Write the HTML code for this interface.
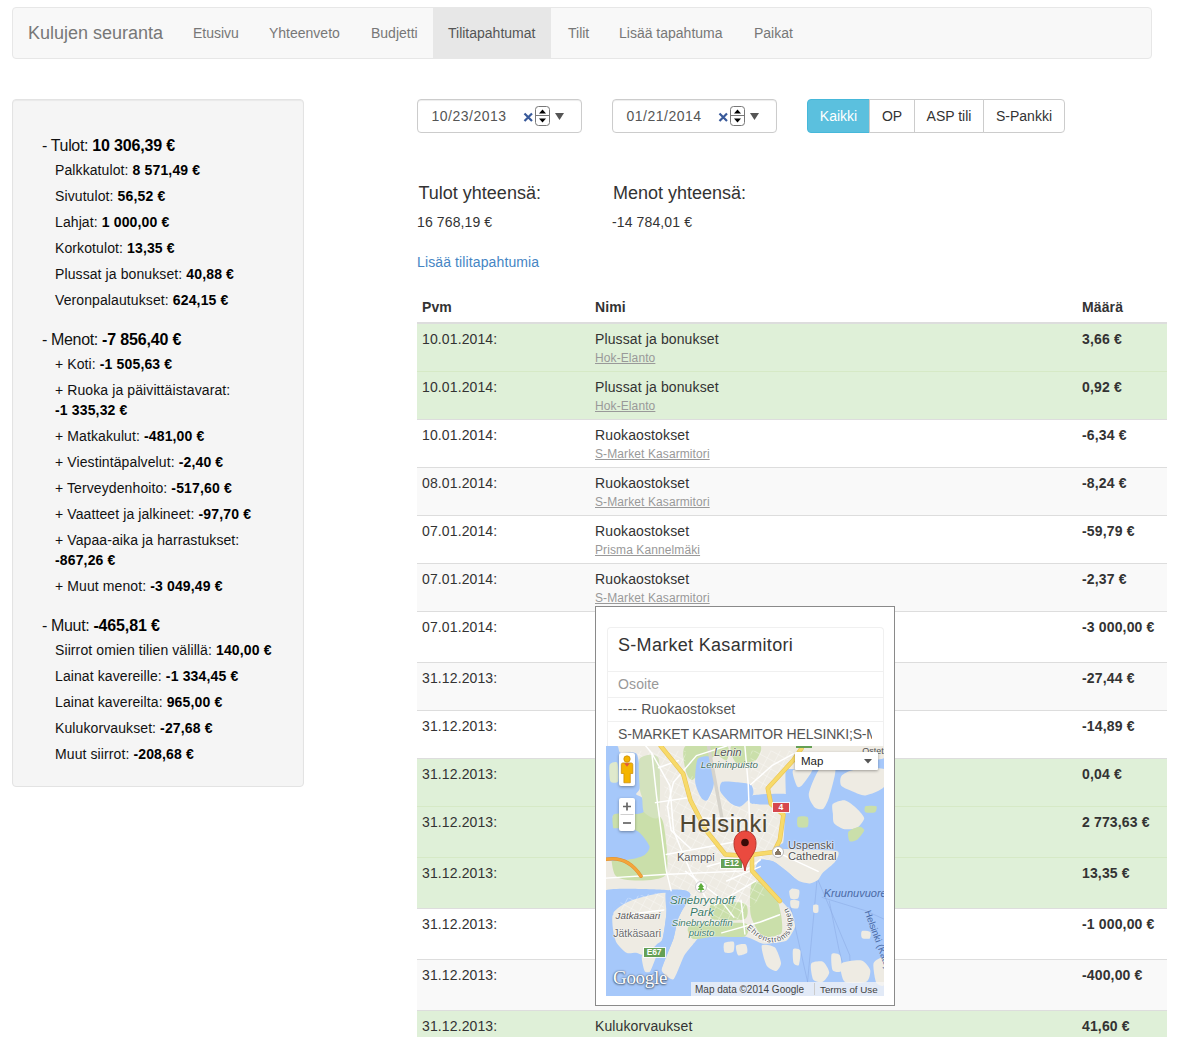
<!DOCTYPE html>
<html><head><meta charset="utf-8"><title>Kulujen seuranta</title>
<style>
*{box-sizing:border-box;}
html,body{margin:0;padding:0;background:#fff;}
body{width:1179px;height:1037px;overflow:hidden;position:relative;font-family:"Liberation Sans",sans-serif;font-size:14px;line-height:20px;color:#333;}
.t{position:absolute;white-space:nowrap;line-height:20px;letter-spacing:0.12px;}
.navbar{position:absolute;left:12px;top:7px;width:1140px;height:52px;background:#f8f8f8;border:1px solid #e7e7e7;border-radius:4px;}
.brand{position:absolute;left:15px;top:15px;font-size:18px;line-height:20px;color:#777;white-space:nowrap;}
.nav a{position:absolute;top:0;height:50px;line-height:50px;color:#777;white-space:nowrap;padding:0 15px;}
.nav a.active{background:#e7e7e7;color:#555;}
.well{position:absolute;left:12px;top:99px;width:292px;height:688px;background:#f5f5f5;border:1px solid #e3e3e3;border-radius:4px;box-shadow:inset 0 1px 1px rgba(0,0,0,.05);}
.sb{position:absolute;white-space:nowrap;line-height:20px;color:#111;font-size:14px;letter-spacing:0.1px;}
.sb.h{font-size:16px;letter-spacing:-0.35px;}
.sb.h b{letter-spacing:-0.15px;}
.sb b{color:#000;letter-spacing:0.15px;}
.inp{position:absolute;top:99px;width:165px;height:34px;border:1px solid #ccc;border-radius:4px;background:#fff;box-shadow:inset 0 1px 1px rgba(0,0,0,.075);}
.inp .v{position:absolute;left:13.5px;top:6px;line-height:20px;color:#555;letter-spacing:0.5px;}
.btng{position:absolute;left:807px;top:99px;height:34px;}
.btn{position:absolute;top:0;height:34px;line-height:20px;padding:6px 0;text-align:center;border:1px solid #ccc;background:#fff;color:#333;}
.row{position:absolute;left:417px;width:750px;border-top:1px solid #ddd;}
.sl{font-size:12px;color:#999;text-decoration:underline;line-height:17px;letter-spacing:0.1px;}
</style></head><body>
<div class="navbar">
<div class="brand">Kulujen seuranta</div>
<div class="nav">
<a style="left:165px">Etusivu</a><a style="left:241px">Yhteenveto</a><a style="left:343px">Budjetti</a><a class="active" style="left:420px;width:118px">Tilitapahtumat</a><a style="left:540px">Tilit</a><a style="left:591px">Lisää tapahtuma</a><a style="left:726px">Paikat</a>
</div></div>
<div class="well"></div>
<div class="sb h" style="top:136px;left:42px">- Tulot: <b>10 306,39 €</b></div>
<div class="sb " style="top:160px;left:55px">Palkkatulot: <b>8 571,49 €</b></div>
<div class="sb " style="top:186px;left:55px">Sivutulot: <b>56,52 €</b></div>
<div class="sb " style="top:212px;left:55px">Lahjat: <b>1 000,00 €</b></div>
<div class="sb " style="top:238px;left:55px">Korkotulot: <b>13,35 €</b></div>
<div class="sb " style="top:264px;left:55px">Plussat ja bonukset: <b>40,88 €</b></div>
<div class="sb " style="top:290px;left:55px">Veronpalautukset: <b>624,15 €</b></div>
<div class="sb h" style="top:330px;left:42px">- Menot: <b>-7 856,40 €</b></div>
<div class="sb " style="top:354px;left:55px">+ Koti: <b>-1 505,63 €</b></div>
<div class="sb " style="top:380px;left:55px">+ Ruoka ja päivittäistavarat:</div>
<div class="sb " style="top:400px;left:55px"><b>-1 335,32 €</b></div>
<div class="sb " style="top:426px;left:55px">+ Matkakulut: <b>-481,00 €</b></div>
<div class="sb " style="top:452px;left:55px">+ Viestintäpalvelut: <b>-2,40 €</b></div>
<div class="sb " style="top:478px;left:55px">+ Terveydenhoito: <b>-517,60 €</b></div>
<div class="sb " style="top:504px;left:55px">+ Vaatteet ja jalkineet: <b>-97,70 €</b></div>
<div class="sb " style="top:530px;left:55px">+ Vapaa-aika ja harrastukset:</div>
<div class="sb " style="top:550px;left:55px"><b>-867,26 €</b></div>
<div class="sb " style="top:576px;left:55px">+ Muut menot: <b>-3 049,49 €</b></div>
<div class="sb h" style="top:616px;left:42px">- Muut: <b>-465,81 €</b></div>
<div class="sb " style="top:640px;left:55px">Siirrot omien tilien välillä: <b>140,00 €</b></div>
<div class="sb " style="top:666px;left:55px">Lainat kavereille: <b>-1 334,45 €</b></div>
<div class="sb " style="top:692px;left:55px">Lainat kavereilta: <b>965,00 €</b></div>
<div class="sb " style="top:718px;left:55px">Kulukorvaukset: <b>-27,68 €</b></div>
<div class="sb " style="top:744px;left:55px">Muut siirrot: <b>-208,68 €</b></div>
<div class="inp" style="left:417px"><div class="v">10/23/2013</div><svg style="position:absolute;left:0;top:0" width="165" height="34" viewBox="0 0 165 34"><path d="M106.5 13.5 L114 21 M114 13.5 L106.5 21" stroke="#38599a" stroke-width="2.2" stroke-linecap="butt"/><rect x="117.5" y="6.5" width="14" height="19" rx="3" ry="3" fill="#fff" stroke="#777" stroke-width="1"/><line x1="118" y1="15.5" x2="131" y2="15.5" stroke="#777" stroke-width="1"/><path d="M121 13.5 L124.5 9.5 L128 13.5 Z" fill="#000"/><path d="M121 18.5 L128 18.5 L124.5 22.5 Z" fill="#000"/><path d="M137 13 L146 13 L141.5 20 Z" fill="#555"/></svg></div>
<div class="inp" style="left:612px"><div class="v">01/21/2014</div><svg style="position:absolute;left:0;top:0" width="165" height="34" viewBox="0 0 165 34"><path d="M106.5 13.5 L114 21 M114 13.5 L106.5 21" stroke="#38599a" stroke-width="2.2" stroke-linecap="butt"/><rect x="117.5" y="6.5" width="14" height="19" rx="3" ry="3" fill="#fff" stroke="#777" stroke-width="1"/><line x1="118" y1="15.5" x2="131" y2="15.5" stroke="#777" stroke-width="1"/><path d="M121 13.5 L124.5 9.5 L128 13.5 Z" fill="#000"/><path d="M121 18.5 L128 18.5 L124.5 22.5 Z" fill="#000"/><path d="M137 13 L146 13 L141.5 20 Z" fill="#555"/></svg></div>
<div class="btng"><div class="btn" style="left:0;width:63px;background:#5bc0de;border-color:#46b8da;color:#fff;border-radius:4px 0 0 4px">Kaikki</div><div class="btn" style="left:62px;width:46px">OP</div><div class="btn" style="left:107px;width:70px">ASP tili</div><div class="btn" style="left:176px;width:82px;border-radius:0 4px 4px 0">S-Pankki</div></div>
<div class="t" style="left:418.5px;top:183px;font-size:18px;color:#333;letter-spacing:0">Tulot yhteensä:</div>
<div class="t" style="left:613px;top:183px;font-size:18px;color:#333;letter-spacing:0">Menot yhteensä:</div>
<div class="t" style="left:417px;top:212px;color:#333">16 768,19 €</div>
<div class="t" style="left:612px;top:212px;color:#333">-14 784,01 €</div>
<div class="t" style="left:417px;top:252px;color:#4585c4">Lisää tilitapahtumia</div>
<div class="t" style="left:422px;top:297px;font-weight:bold;color:#333">Pvm</div>
<div class="t" style="left:595px;top:297px;font-weight:bold;color:#333">Nimi</div>
<div class="t" style="left:1082px;top:297px;font-weight:bold;color:#333">Määrä</div>
<div class="row" style="top:322px;height:49px;background:#dff0d8;border-top-width:2px;border-top-color:#ddd"></div>
<div class="t" style="left:422px;top:329px">10.01.2014:</div>
<div class="t" style="left:595px;top:329px">Plussat ja bonukset</div>
<div class="t sl" style="left:595px;top:350px">Hok-Elanto</div>
<div class="t" style="left:1082px;top:329px;font-weight:bold;letter-spacing:0.15px">3,66 €</div>
<div class="row" style="top:371px;height:48px;background:#dff0d8;border-top-width:1px;border-top-color:#d6e9c6"></div>
<div class="t" style="left:422px;top:377px">10.01.2014:</div>
<div class="t" style="left:595px;top:377px">Plussat ja bonukset</div>
<div class="t sl" style="left:595px;top:398px">Hok-Elanto</div>
<div class="t" style="left:1082px;top:377px;font-weight:bold;letter-spacing:0.15px">0,92 €</div>
<div class="row" style="top:419px;height:48px;background:#fff;border-top-width:1px;border-top-color:#ddd"></div>
<div class="t" style="left:422px;top:425px">10.01.2014:</div>
<div class="t" style="left:595px;top:425px">Ruokaostokset</div>
<div class="t sl" style="left:595px;top:446px">S-Market Kasarmitori</div>
<div class="t" style="left:1082px;top:425px;font-weight:bold;letter-spacing:0.15px">-6,34 €</div>
<div class="row" style="top:467px;height:48px;background:#f9f9f9;border-top-width:1px;border-top-color:#ddd"></div>
<div class="t" style="left:422px;top:473px">08.01.2014:</div>
<div class="t" style="left:595px;top:473px">Ruokaostokset</div>
<div class="t sl" style="left:595px;top:494px">S-Market Kasarmitori</div>
<div class="t" style="left:1082px;top:473px;font-weight:bold;letter-spacing:0.15px">-8,24 €</div>
<div class="row" style="top:515px;height:48px;background:#fff;border-top-width:1px;border-top-color:#ddd"></div>
<div class="t" style="left:422px;top:521px">07.01.2014:</div>
<div class="t" style="left:595px;top:521px">Ruokaostokset</div>
<div class="t sl" style="left:595px;top:542px">Prisma Kannelmäki</div>
<div class="t" style="left:1082px;top:521px;font-weight:bold;letter-spacing:0.15px">-59,79 €</div>
<div class="row" style="top:563px;height:48px;background:#f9f9f9;border-top-width:1px;border-top-color:#ddd"></div>
<div class="t" style="left:422px;top:569px">07.01.2014:</div>
<div class="t" style="left:595px;top:569px">Ruokaostokset</div>
<div class="t sl" style="left:595px;top:590px">S-Market Kasarmitori</div>
<div class="t" style="left:1082px;top:569px;font-weight:bold;letter-spacing:0.15px">-2,37 €</div>
<div class="row" style="top:611px;height:51px;background:#fff;border-top-width:1px;border-top-color:#ddd"></div>
<div class="t" style="left:422px;top:617px">07.01.2014:</div>
<div class="t" style="left:1082px;top:617px;font-weight:bold;letter-spacing:0.15px">-3 000,00 €</div>
<div class="row" style="top:662px;height:48px;background:#f9f9f9;border-top-width:1px;border-top-color:#ddd"></div>
<div class="t" style="left:422px;top:668px">31.12.2013:</div>
<div class="t" style="left:1082px;top:668px;font-weight:bold;letter-spacing:0.15px">-27,44 €</div>
<div class="row" style="top:710px;height:48px;background:#fff;border-top-width:1px;border-top-color:#ddd"></div>
<div class="t" style="left:422px;top:716px">31.12.2013:</div>
<div class="t" style="left:1082px;top:716px;font-weight:bold;letter-spacing:0.15px">-14,89 €</div>
<div class="row" style="top:758px;height:48px;background:#dff0d8;border-top-width:1px;border-top-color:#ddd"></div>
<div class="t" style="left:422px;top:764px">31.12.2013:</div>
<div class="t" style="left:1082px;top:764px;font-weight:bold;letter-spacing:0.15px">0,04 €</div>
<div class="row" style="top:806px;height:51px;background:#dff0d8;border-top-width:1px;border-top-color:#d6e9c6"></div>
<div class="t" style="left:422px;top:812px">31.12.2013:</div>
<div class="t" style="left:1082px;top:812px;font-weight:bold;letter-spacing:0.15px">2 773,63 €</div>
<div class="row" style="top:857px;height:51px;background:#dff0d8;border-top-width:1px;border-top-color:#d6e9c6"></div>
<div class="t" style="left:422px;top:863px">31.12.2013:</div>
<div class="t" style="left:1082px;top:863px;font-weight:bold;letter-spacing:0.15px">13,35 €</div>
<div class="row" style="top:908px;height:51px;background:#fff;border-top-width:1px;border-top-color:#ddd"></div>
<div class="t" style="left:422px;top:914px">31.12.2013:</div>
<div class="t" style="left:1082px;top:914px;font-weight:bold;letter-spacing:0.15px">-1 000,00 €</div>
<div class="row" style="top:959px;height:51px;background:#f9f9f9;border-top-width:1px;border-top-color:#ddd"></div>
<div class="t" style="left:422px;top:965px">31.12.2013:</div>
<div class="t" style="left:1082px;top:965px;font-weight:bold;letter-spacing:0.15px">-400,00 €</div>
<div class="row" style="top:1010px;height:51px;background:#dff0d8;border-top-width:1px;border-top-color:#ddd"></div>
<div class="t" style="left:422px;top:1016px">31.12.2013:</div>
<div class="t" style="left:595px;top:1016px">Kulukorvaukset</div>
<div class="t" style="left:1082px;top:1016px;font-weight:bold;letter-spacing:0.15px">41,60 €</div>
<div style="position:absolute;left:595px;top:606px;width:300px;height:400px;border:1px solid #8a8a8a;background:#fff"></div>
<div style="position:absolute;left:607px;top:627px;width:277px;height:120px;border:1px solid #f0f0f0;border-bottom:none;border-radius:4px 4px 0 0;overflow:hidden"><div style="position:absolute;left:0;top:43px;width:100%;height:1px;background:#f0f0f0"></div><div style="position:absolute;left:0;top:69px;width:100%;height:1px;background:#f0f0f0"></div><div style="position:absolute;left:0;top:93px;width:100%;height:1px;background:#f0f0f0"></div></div>
<div class="t" style="left:618px;top:635px;font-size:18px;color:#333;letter-spacing:0.3px">S-Market Kasarmitori</div>
<div class="t" style="left:618px;top:674px;color:#999">Osoite</div>
<div class="t" style="left:618px;top:699px;color:#555">---- Ruokaostokset</div>
<div style="position:absolute;left:618px;top:724px;width:254px;height:22px;overflow:hidden"><div class="t" style="left:0;top:0;color:#555;letter-spacing:-0.18px">S-MARKET KASARMITOR HELSINKI;S-MARKET</div></div>
<div style="position:absolute;left:606px;top:746px;width:278px;height:250px;overflow:hidden"><svg width="278" height="250" viewBox="0 0 1153 1037" style="position:absolute;left:0;top:0;display:block"><rect x="0" y="0" width="1153" height="1037" fill="#a6c8fa"/><path d="M876,548 L836,978" fill="none" stroke="#8eaee6" stroke-width="2.5" stroke-linecap="round" stroke-linejoin="round" /><path d="M876,548 L1011,868 L1016,978" fill="none" stroke="#8eaee6" stroke-width="2.5" stroke-linecap="round" stroke-linejoin="round" /><path d="M896,628 L1076,683 L1153,718" fill="none" stroke="#8eaee6" stroke-width="2.5" stroke-linecap="round" stroke-linejoin="round" /><path d="M766,668 L836,978" fill="none" stroke="#8eaee6" stroke-width="2.5" stroke-linecap="round" stroke-linejoin="round" /><path d="M926,643 L966,843 L1001,978" fill="none" stroke="#8eaee6" stroke-width="2.5" stroke-linecap="round" stroke-linejoin="round" /><path d="M0,0 C96,-29 1057,-4 1153,0 C1249,4 1157,45 1153,50 C1149,55 1130,56 1100,60 C1070,64 820,92 790,95 C760,98 750,91 746,100 C742,109 746,193 746,205 C746,217 746,230 746,240 C746,250 741,317 740,330 C739,343 738,392 735,400 C732,408 682,422 700,425 C718,428 935,430 956,435 C977,440 955,472 950,480 C945,488 906,519 900,525 C894,531 884,551 880,555 C876,559 853,570 846,570 C839,570 812,567 800,560 C788,553 713,489 700,482 C687,475 647,469 640,472 C633,475 617,509 620,520 C623,531 671,590 680,600 C689,610 718,632 725,640 C732,648 765,681 770,690 C775,699 786,740 784,750 C782,760 759,802 748,808 C737,814 665,822 651,820 C637,818 593,792 576,790 C559,788 468,789 450,790 C432,791 366,799 360,800 C354,801 383,792 380,798 C377,804 333,854 325,868 C317,882 288,963 280,968 C272,973 230,942 230,928 C230,914 275,815 280,798 C285,781 292,737 295,728 C298,719 305,702 310,693 C315,684 349,626 350,618 C351,610 333,599 325,598 C317,597 257,603 250,603 C243,603 261,598 240,598 C219,598 20,611 0,600 C-20,589 -8,481 0,470 C8,459 87,472 100,470 C113,468 153,457 160,452 C167,447 183,424 180,415 C177,406 140,355 125,350 C110,345 10,379 0,350 C-10,321 -96,29 0,0Z" fill="#eeebe3" /><path d="M30,693 C22,708 28,753 30,768 C32,783 39,808 45,818 C51,828 76,853 85,858 C94,863 116,857 125,858 C134,859 155,872 165,868 C175,864 202,831 210,823 C218,815 230,813 235,798 C240,783 248,720 250,698 C252,676 268,616 250,610 C232,604 126,633 100,643 C74,653 38,678 30,693Z" fill="#eeebe3" /><path d="M150,868 C156,860 206,860 210,868 C214,876 191,925 185,933 C179,941 164,941 160,933 C156,925 144,876 150,868Z" fill="#eeebe3" /><path d="M776,100 C784,92 852,87 856,95 C860,103 819,157 811,165 C803,173 795,173 791,165 C787,157 768,108 776,100Z" fill="#eeebe3" /><path d="M886,95 C899,83 946,82 951,95 C956,108 932,191 926,210 C920,229 908,255 901,260 C894,265 873,262 866,255 C859,248 839,219 841,200 C843,181 873,107 886,95Z" fill="#eeebe3" /><path d="M976,125 C982,117 1005,104 1026,100 C1047,96 1138,87 1153,95 C1168,103 1162,157 1153,170 C1144,183 1091,203 1076,205 C1061,207 1038,195 1026,190 C1014,185 982,173 976,165 C970,157 970,133 976,125Z" fill="#eeebe3" /><path d="M941,240 C947,234 978,223 990,225 C1002,227 1032,251 1041,260 C1050,269 1071,291 1071,300 C1071,309 1050,335 1041,340 C1032,345 1001,347 990,345 C979,343 952,328 946,320 C940,312 942,289 941,280 C940,271 935,246 941,240Z" fill="#eeebe3" /><path d="M761,593 C765,589 797,593 801,598 C805,603 800,629 796,633 C792,637 770,638 766,633 C762,628 757,597 761,593Z" fill="#eeebe3" /><path d="M766,640 C770,637 798,639 801,643 C804,647 800,670 796,673 C792,676 772,674 768,670 C764,666 762,643 766,640Z" fill="#eeebe3" /><path d="M646,828 C650,819 691,827 700,835 C709,843 725,889 726,900 C727,911 713,932 706,933 C699,934 673,922 666,910 C659,898 642,837 646,828Z" fill="#eeebe3" /><path d="M776,843 C779,837 803,840 806,848 C809,856 803,902 800,908 C797,914 781,908 778,900 C775,892 773,849 776,843Z" fill="#eeebe3" /><path d="M851,903 C856,894 891,891 900,895 C909,899 926,930 926,940 C926,950 908,974 900,978 C892,982 866,979 860,970 C854,961 846,912 851,903Z" fill="#eeebe3" /><path d="M936,863 C940,856 965,860 970,868 C975,876 980,926 976,933 C972,940 945,938 940,930 C935,922 932,870 936,863Z" fill="#eeebe3" /><path d="M976,903 C984,893 1046,887 1060,890 C1074,893 1094,920 1096,930 C1098,940 1092,972 1080,978 C1068,984 1002,987 990,978 C978,969 968,913 976,903Z" fill="#eeebe3" /><path d="M1061,768 C1065,765 1092,768 1096,772 C1100,776 1098,795 1094,798 C1090,801 1066,800 1062,796 C1058,792 1057,771 1061,768Z" fill="#eeebe3" /><path d="M1110,900 C1114,888 1148,870 1153,880 C1158,890 1157,978 1153,990 C1149,1002 1125,990 1120,980 C1115,970 1106,912 1110,900Z" fill="#eeebe3" /><path d="M490,818 C494,813 526,809 530,813 C534,817 532,848 528,853 C524,858 496,860 492,856 C488,852 486,823 490,818Z" fill="#eeebe3" /><path d="M540,828 C544,823 575,820 580,823 C585,826 589,853 585,858 C581,863 553,872 548,868 C543,864 536,833 540,828Z" fill="#eeebe3" /><path d="M860,660 C862,656 878,656 880,660 C882,664 882,686 880,690 C878,694 862,694 860,690 C858,686 858,664 860,660Z" fill="#eeebe3" /><path d="M31,281 C50,251 176,275 200,281 C224,287 235,300 240,330 C245,360 268,514 245,538 C222,562 65,568 40,538 C15,508 12,311 31,281Z" fill="#cadfaa" /><path d="M330,0 C350,-12 480,-7 500,0 C520,7 506,55 500,60 C494,65 466,31 450,40 C434,49 374,133 360,140 C346,147 334,116 330,100 C326,84 310,12 330,0Z" fill="#cadfaa" /><path d="M440,653 C456,645 560,645 576,653 C592,661 592,710 576,718 C560,726 456,726 440,718 C424,710 424,661 440,653Z" fill="#cadfaa" /><path d="M350,745 C375,737 550,730 576,735 C602,740 591,784 576,790 C561,796 475,789 450,790 C425,791 372,805 360,800 C348,795 325,753 350,745Z" fill="#cadfaa" /><path d="M606,568 C616,554 676,565 690,580 C704,595 722,677 726,700 C730,723 735,768 726,778 C717,788 665,799 650,790 C635,781 605,726 600,700 C595,674 596,582 606,568Z" fill="#cadfaa" /><path d="M520,0 C532,-8 628,-7 640,0 C652,7 632,52 620,60 C608,68 552,77 540,70 C528,63 508,8 520,0Z" fill="#cadfaa" /><path d="M796,295 C801,290 831,290 836,295 C841,300 841,330 836,335 C831,340 801,340 796,335 C791,330 791,300 796,295Z" fill="#cadfaa" /><path d="M1076,250 C1081,247 1116,247 1121,250 C1126,253 1121,272 1116,275 C1111,278 1081,278 1076,275 C1071,272 1071,253 1076,250Z" fill="#cadfaa" /><path d="M1006,355 C1011,348 1042,336 1050,335 C1058,334 1072,344 1071,350 C1070,356 1047,385 1040,390 C1033,395 1014,399 1010,395 C1006,391 1001,362 1006,355Z" fill="#cadfaa" /><defs><pattern id="grid" width="34" height="34" patternUnits="userSpaceOnUse" patternTransform="rotate(28)"><path d="M0,0 L34,0 M0,0 L0,34" stroke="#ffffff" stroke-width="3.2" opacity="0.75"/></pattern></defs><polygon points="240,130 350,120 560,260 700,260 735,400 600,560 560,720 420,740 320,640 260,560 250,400" fill="url(#grid)" /><polygon points="540,470 640,470 680,600 560,700 500,600" fill="url(#grid)" /><polygon points="60,610 240,610 240,690 60,720" fill="url(#grid)" /><polygon points="60,20 330,20 330,120 240,130 120,100" fill="url(#grid)" /><polygon points="600,20 780,20 690,170 600,180" fill="url(#grid)" /><path d="M380,55 C387,43 422,39 430,45 C438,51 448,95 450,110 C452,125 448,157 445,170 C442,183 426,220 420,225 C414,230 401,224 395,215 C389,206 372,169 370,150 C368,131 373,67 380,55Z" fill="#a6c8fa" /><path d="M480,150 C488,145 526,149 540,150 C554,151 592,154 600,160 C608,166 615,190 610,200 C605,210 570,245 560,250 C550,255 530,247 520,240 C510,233 480,200 475,190 C470,180 472,155 480,150Z" fill="#a6c8fa" /><path d="M0,0 C5,-43 40,-3 47,0 C54,3 51,24 60,28 C69,32 116,22 125,30 C134,38 138,83 140,100 C142,117 142,163 140,175 C138,187 124,195 125,200 C126,205 146,207 150,215 C154,223 160,262 158,270 C156,278 145,280 130,282 C115,284 43,275 31,285 C19,295 35,356 31,365 C27,374 4,408 0,365 C-4,322 -5,43 0,0Z" fill="#a6c8fa" /><path d="M0,350 C15,336 104,342 125,350 C146,358 176,403 180,415 C184,427 169,446 160,452 C151,458 119,468 100,470 C81,472 12,484 0,470 C-12,456 -15,364 0,350Z" fill="#a6c8fa" /><path d="M606,205 C623,200 733,196 750,200 C767,204 767,235 750,240 C733,245 623,244 606,240 C589,236 589,210 606,205Z" fill="#a6c8fa" /><path d="M0,598 C28,586 211,595 240,596 C269,597 260,603 250,606 C240,609 176,613 150,618 C124,623 44,640 30,650 C16,660 34,694 30,700 C26,706 3,712 0,700 C-3,688 -28,610 0,598Z" fill="#a6c8fa" /><path d="M250,603 C259,591 313,596 325,598 C337,600 352,607 350,618 C348,629 316,680 310,693 C304,706 298,716 295,728 C292,740 288,775 280,798 C272,821 239,900 230,928 C221,956 212,1024 200,1037 C188,1050 132,1049 130,1037 C128,1025 176,953 185,933 C194,913 204,884 210,868 C216,852 230,818 235,798 C240,778 248,721 250,698 C252,675 241,615 250,603Z" fill="#a6c8fa" /><path d="M640,472 C649,468 682,472 700,482 C718,492 785,544 790,560 C795,576 748,610 740,620 C732,630 728,645 721,643 C714,641 692,614 680,600 C668,586 625,535 620,520 C615,505 631,476 640,472Z" fill="#a6c8fa" /><path d="M15,78 C18,69 43,62 47,70 C51,78 53,137 50,146 C47,155 22,154 18,146 C14,138 12,87 15,78Z" fill="#dfe9cc" /><path d="M140,52 C149,38 209,24 218,52 C227,80 225,265 218,291 C211,317 166,284 158,275 C150,266 152,227 150,215 C148,203 141,194 140,175 C139,156 131,66 140,52Z" fill="#d3e2bd" /><path d="M425,0 L470,240 L490,350" fill="none" stroke="#d6d3cb" stroke-width="14" stroke-linecap="round" stroke-linejoin="round" /><path d="M165,0 L190,30 L265,165 L280,350 L310,425 L350,518 L420,640" fill="none" stroke="#ffffff" stroke-width="6" stroke-linecap="round" stroke-linejoin="round" /><path d="M190,30 L210,210 L250,518 L270,600" fill="none" stroke="#ffffff" stroke-width="6" stroke-linecap="round" stroke-linejoin="round" /><path d="M500,0 L375,40 L280,150 L255,250 L270,350 L350,425" fill="none" stroke="#ffffff" stroke-width="6" stroke-linecap="round" stroke-linejoin="round" /><path d="M205,235 L340,215" fill="none" stroke="#ffffff" stroke-width="6" stroke-linecap="round" stroke-linejoin="round" /><path d="M250,450 L576,390" fill="none" stroke="#ffffff" stroke-width="6" stroke-linecap="round" stroke-linejoin="round" /><path d="M0,548 L240,533 L576,518 L640,472" fill="none" stroke="#ffffff" stroke-width="6" stroke-linecap="round" stroke-linejoin="round" /><path d="M576,0 L590,160 L600,450" fill="none" stroke="#ffffff" stroke-width="6" stroke-linecap="round" stroke-linejoin="round" /><path d="M600,160 L690,80 L800,20" fill="none" stroke="#ffffff" stroke-width="6" stroke-linecap="round" stroke-linejoin="round" /><path d="M330,520 L460,620 L530,710" fill="none" stroke="#ffffff" stroke-width="6" stroke-linecap="round" stroke-linejoin="round" /><path d="M500,560 L640,500" fill="none" stroke="#ffffff" stroke-width="6" stroke-linecap="round" stroke-linejoin="round" /><path d="M560,640 L576,780" fill="none" stroke="#ffffff" stroke-width="6" stroke-linecap="round" stroke-linejoin="round" /><path d="M450,660 L620,560" fill="none" stroke="#ffffff" stroke-width="6" stroke-linecap="round" stroke-linejoin="round" /><path d="M720,445 L880,520" fill="none" stroke="#ffffff" stroke-width="6" stroke-linecap="round" stroke-linejoin="round" /><path d="M480,775 L640,730 L720,700" fill="none" stroke="#ffffff" stroke-width="6" stroke-linecap="round" stroke-linejoin="round" /><path d="M80,700 L240,680" fill="none" stroke="#ffffff" stroke-width="6" stroke-linecap="round" stroke-linejoin="round" /><path d="M218,90 L300,60" fill="none" stroke="#ffffff" stroke-width="6" stroke-linecap="round" stroke-linejoin="round" /><path d="M400,300 L560,300" fill="none" stroke="#ffffff" stroke-width="6" stroke-linecap="round" stroke-linejoin="round" /><path d="M420,500 L560,460" fill="none" stroke="#ffffff" stroke-width="6" stroke-linecap="round" stroke-linejoin="round" /><path d="M0,470 Q90,455 145,540" fill="none" stroke="#e09030" stroke-width="15" stroke-linecap="round" stroke-linejoin="round" /><path d="M0,470 Q90,455 145,540" fill="none" stroke="#f4a53a" stroke-width="11" stroke-linecap="round" stroke-linejoin="round" /><path d="M227,0 L320,115 L350,225 L415,350 L495,450 L576,455 L696,440 L721,390 L736,285 L684,240 L671,175 L776,60 L811,10" fill="none" stroke="#e9c455" stroke-width="19" stroke-linecap="round" stroke-linejoin="round" /><path d="M605,455 L606,518 L721,643" fill="none" stroke="#e9c455" stroke-width="19" stroke-linecap="round" stroke-linejoin="round" /><path d="M227,0 L320,115 L350,225 L415,350 L495,450 L576,455 L696,440 L721,390 L736,285 L684,240 L671,175 L776,60 L811,10" fill="none" stroke="#f7da6a" stroke-width="14" stroke-linecap="round" stroke-linejoin="round" /><path d="M605,455 L606,518 L721,643" fill="none" stroke="#f7da6a" stroke-width="14" stroke-linecap="round" stroke-linejoin="round" /></svg><div style="position:absolute;left:73.8px;top:66.5px;font-size:23.5px;line-height:23.5px;color:#4f4630;white-space:nowrap;letter-spacing:0.75px;-webkit-text-stroke:0.2px #4f4630;text-shadow:0 0 2px #fff,0 0 2px #fff,0 0 1px #fff;">Helsinki</div><div style="position:absolute;left:70.9px;top:106.1px;font-size:11.2px;line-height:11.2px;color:#5e5e5e;white-space:nowrap;text-shadow:0 0 2px #fff,0 0 2px #fff,0 0 1px #fff;">Kamppi</div><div style="position:absolute;left:182.0px;top:93.8px;font-size:11.2px;line-height:11.2px;color:#505050;white-space:nowrap;text-shadow:0 0 2px #fff,0 0 2px #fff,0 0 1px #fff;">Uspenski</div><div style="position:absolute;left:182.0px;top:104.9px;font-size:11.2px;line-height:11.2px;color:#505050;white-space:nowrap;text-shadow:0 0 2px #fff,0 0 2px #fff,0 0 1px #fff;">Cathedral</div><div style="position:absolute;left:108.0px;top:1.4px;font-size:11.3px;line-height:11.3px;color:#555;white-space:nowrap;font-style:italic;text-shadow:0 0 2px #fff,0 0 2px #fff,0 0 1px #fff;">Lenin</div><div style="position:absolute;left:94.8px;top:13.5px;font-size:9.7px;line-height:9.7px;color:#3f6c5c;white-space:nowrap;font-style:italic;text-shadow:0 0 2px #fff,0 0 2px #fff,0 0 1px #fff;">Lenininpuisto</div><div style="position:absolute;left:64.1px;top:148.0px;font-size:11.6px;line-height:11.6px;color:#3a7a66;white-space:nowrap;font-style:italic;text-shadow:0 0 2px #fff,0 0 2px #fff,0 0 1px #fff;">Sinebrychoff</div><div style="position:absolute;left:83.9px;top:160.1px;font-size:11.6px;line-height:11.6px;color:#3a7a66;white-space:nowrap;font-style:italic;text-shadow:0 0 2px #fff,0 0 2px #fff,0 0 1px #fff;">Park</div><div style="position:absolute;left:65.8px;top:171.9px;font-size:9.6px;line-height:9.6px;color:#3a7a66;white-space:nowrap;font-style:italic;text-shadow:0 0 2px #fff,0 0 2px #fff,0 0 1px #fff;">Sinebrychoffin</div><div style="position:absolute;left:82.7px;top:182.0px;font-size:9.6px;line-height:9.6px;color:#3a7a66;white-space:nowrap;font-style:italic;text-shadow:0 0 2px #fff,0 0 2px #fff,0 0 1px #fff;">puisto</div><div style="position:absolute;left:9.6px;top:165.4px;font-size:9.8px;line-height:9.8px;color:#555;white-space:nowrap;font-style:italic;text-shadow:0 0 2px #fff,0 0 2px #fff,0 0 1px #fff;">Jätkäsaari</div><div style="position:absolute;left:7.2px;top:181.8px;font-size:10.5px;line-height:10.5px;color:#6a6a6a;white-space:nowrap;text-shadow:0 0 2px #fff,0 0 2px #fff,0 0 1px #fff;">Jätkäsaari</div><div style="position:absolute;left:217.7px;top:142.3px;font-size:11px;line-height:11px;color:#4a6aa6;white-space:nowrap;font-style:italic;">Kruunuvuorenselkä</div><div style="position:absolute;left:256.3px;top:0.7px;font-size:9px;line-height:9px;color:#555;white-space:nowrap;">Ostetri</div><div style="position:absolute;left:266px;top:163px;font-size:9.5px;line-height:10px;color:#4a6aa6;white-space:nowrap;transform:rotate(70deg);transform-origin:0 0">Helsinki (Katajanokka)</div><svg style="position:absolute;left:0;top:0" width="278" height="250" viewBox="0 0 1153 1037"><defs><path id="ehr" d="M582,756 C620,790 650,815 690,815 C740,812 775,780 772,735 C770,690 750,655 722,622"/></defs><text font-family="Liberation Sans" font-size="33" fill="#555" stroke="#fff" stroke-width="5" letter-spacing="3" paint-order="stroke"><textPath href="#ehr">Ehrenströmsvägen</textPath></text></svg><div style="position:absolute;left:115px;top:112.5px;width:21px;height:9px;background:#65a055;box-shadow:0 0 0 1px rgba(255,255,255,.8);color:#fff;font-size:8.5px;line-height:9px;text-align:center;font-weight:bold;letter-spacing:-0.2px">E12</div><div style="position:absolute;left:37.5px;top:202px;width:21px;height:9px;background:#65a055;box-shadow:0 0 0 1px rgba(255,255,255,.8);color:#fff;font-size:8.5px;line-height:9px;text-align:center;font-weight:bold;letter-spacing:-0.2px">E67</div><div style="position:absolute;left:167px;top:56.5px;width:15.5px;height:9px;background:#d6474e;box-shadow:0 0 0 1px rgba(255,255,255,.8);color:#fff;font-size:8.5px;line-height:9px;text-align:center;font-weight:bold;letter-spacing:-0.2px">4</div><div style="position:absolute;left:190px;top:-8px;width:16px;height:10px;background:#65a055"></div><div style="position:absolute;left:166px;top:100px;width:12px;height:12px;border-radius:50%;background:#fff;border:1px solid #bbb;box-sizing:border-box"></div><svg style="position:absolute;left:168px;top:102px" width="8" height="8" viewBox="0 0 8 8"><path d="M1,7 L1,4 L2,4 L2,3 L3,3 L3,1 L5,1 L5,3 L6,3 L6,4 L7,4 L7,7 Z" fill="#8a7a66"/></svg><div style="position:absolute;left:89px;top:135px;width:12px;height:12px;border-radius:50%;background:#fff;border:1px solid #ccc;box-sizing:border-box"></div><svg style="position:absolute;left:91px;top:136.5px" width="8" height="9" viewBox="0 0 8 9"><path d="M4,0 L7,4 L5.5,4 L7.5,7 L4.5,7 L4.5,9 L3.5,9 L3.5,7 L0.5,7 L2.5,4 L1,4 Z" fill="#5cad3c"/></svg><svg style="position:absolute;left:127px;top:84px" width="24" height="42" viewBox="0 0 24 42"><path d="M12,41 C11,33 7,29 4,24 C1.5,20 1,17 1,13 C1,6 6,1 12,1 C18,1 23,6 23,13 C23,17 22.5,20 20,24 C17,29 13,33 12,41 Z" fill="#ea4a3f" stroke="#b8342c" stroke-width="1"/><circle cx="12" cy="12.5" r="3.8" fill="#3a0b07"/></svg><div style="position:absolute;left:13px;top:7px;width:16px;height:33px;background:#fff;border-radius:2px;box-shadow:0 1px 3px rgba(0,0,0,.35)"></div><svg style="position:absolute;left:13px;top:7px" width="16" height="33" viewBox="0 0 16 33"><path d="M2.3,11.5 Q2.3,9.9 4,9.9 L12.2,9.9 Q13.8,9.9 13.8,11.5 L13.8,20.5 L11.3,20.5 L11.3,29.8 L4.9,29.8 L4.9,20.5 L2.3,20.5 Z" fill="#f4b400" stroke="#c88600" stroke-width=".7"/><circle cx="8" cy="6" r="3.2" fill="#f4b400" stroke="#c88600" stroke-width=".7"/><path d="M5.3,10.2 L10.7,10.2 L8,13.8 Z" fill="#e0553d"/></svg><div style="position:absolute;left:13px;top:52px;width:16px;height:33px;background:#fff;border-radius:2px;box-shadow:0 1px 3px rgba(0,0,0,.35)"></div><svg style="position:absolute;left:13px;top:52px" width="16" height="33" viewBox="0 0 16 33"><path d="M4,8.5 L12,8.5 M8,4.5 L8,12.5" stroke="#666" stroke-width="1.7"/><path d="M1.5,16.5 L14.5,16.5" stroke="#cfcfcf" stroke-width="1"/><path d="M4,25 L12,25" stroke="#666" stroke-width="1.7"/></svg><div style="position:absolute;left:189px;top:6px;width:83px;height:17.5px;background:#fff;box-shadow:0 1px 3px rgba(0,0,0,.35);border-radius:1px"></div><div style="position:absolute;left:195px;top:8.8px;font-size:11.5px;line-height:12px;color:#222;white-space:nowrap">Map</div><svg style="position:absolute;left:258px;top:13px" width="8" height="5" viewBox="0 0 8 5"><path d="M0,0 L8,0 L4,4.5 Z" fill="#555"/></svg><div style="position:absolute;left:7px;top:222px;font-family:'Liberation Serif',serif;font-size:19px;line-height:20px;color:#fff;text-shadow:0 0 2px rgba(0,0,0,.6),0 1px 2px rgba(0,0,0,.5);letter-spacing:-0.3px">Google</div><div style="position:absolute;left:84.5px;top:236px;width:194px;height:14px;background:rgba(245,245,245,.75)"></div><div style="position:absolute;left:89px;top:238px;font-size:10px;line-height:11px;color:#444;white-space:nowrap">Map data ©2014 Google</div><div style="position:absolute;left:207.5px;top:237px;width:1px;height:12px;background:#ccc"></div><div style="position:absolute;left:214px;top:238px;font-size:9.8px;line-height:11px;color:#444;white-space:nowrap">Terms of Use</div></div>
</body></html>
